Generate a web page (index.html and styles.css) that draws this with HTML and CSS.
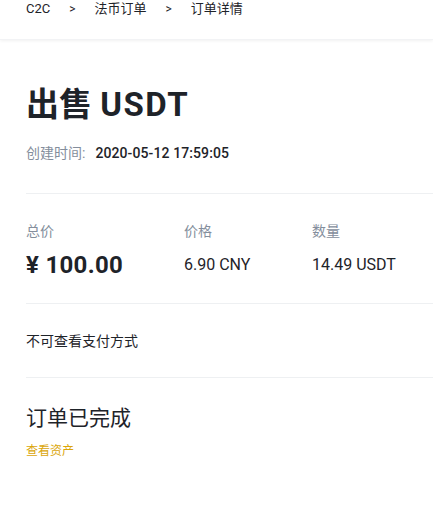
FILE: index.html
```html
<!DOCTYPE html>
<html lang="zh">
<head>
<meta charset="utf-8">
<link rel="stylesheet" href="styles.css">
</head>
<body>
<header class="crumbs">
  <span class="crumb">C2C</span>
  <span class="sep">&gt;</span>
  <span class="crumb">法币订单</span>
  <span class="sep">&gt;</span>
  <span class="crumb">订单详情</span>
</header>
<main class="detail">
  <h1 class="title">出售 <span class="title-coin">USDT</span></h1>
  <div class="created"><span class="label">创建时间:</span><span class="created-value">2020-05-12 17:59:05</span></div>
  <div class="divider"></div>
  <div class="stats">
    <div class="stat-label">总价</div>
    <div class="stat-label">价格</div>
    <div class="stat-label">数量</div>
    <div class="stat-total">¥ 100.00</div>
    <div class="stat-value">6.90 CNY</div>
    <div class="stat-value">14.49 USDT</div>
  </div>
  <div class="divider"></div>
  <div class="payment">不可查看支付方式</div>
  <div class="divider"></div>
  <div class="status">订单已完成</div>
  <a class="assets">查看资产</a>
</main>
</body>
</html>
```

FILE: styles.css
```css
* { box-sizing: border-box; }
body {
  margin: 0;
  background: #fff;
  color: #1e2329;
  font-family: Roboto, "Noto Sans CJK SC", sans-serif;
  overflow: hidden;
}
.crumbs {
  height: 40px;
  display: flex;
  align-items: flex-start;
  padding: 0 26px;
  font-size: 13px;
  line-height: 18px;
  color: #1e2329;
  box-shadow: 0 1px 3px rgba(0, 0, 0, 0.06);
  border-bottom: 1px solid #f2f3f5;
}
.sep { margin: 0 19px 0 19px; font-size: 12px; }
.detail { padding-left: 26px; }
.title {
  margin: 45px 0 0;
  font-size: 33px;
  line-height: 40px;
  font-weight: 700;
  color: #1e2329;
}
.title-coin { letter-spacing: 1.5px; }
.created {
  margin-top: 18px;
  font-size: 14px;
  line-height: 20px;
}
.label { color: #848e9c; }
.created-value { margin-left: 10px; color: #1e2329; font-weight: 500; letter-spacing: 0.1px; }
.divider {
  height: 1px;
  background: #eef0f2;
  margin-top: 30px;
}
.stats {
  display: grid;
  grid-template-columns: 158px 128px auto;
  padding-top: 27px;
  row-gap: 10px;
}
.stat-label { font-size: 14px; line-height: 20px; color: #848e9c; }
.stat-total { font-size: 24px; line-height: 28px; font-weight: 700; letter-spacing: 0.3px; }
.stat-value { font-size: 16px; line-height: 28px; }
.stats + .divider { margin-top: 24px; }
.payment { margin-top: 27px; font-size: 14px; line-height: 20px; }
.payment + .divider { margin-top: 26px; }
.status { margin-top: 26px; font-size: 21px; line-height: 28px; }
.assets {
  display: block;
  margin-top: 11px;
  font-size: 12px;
  line-height: 16px;
  color: #dba60a;
}
```
